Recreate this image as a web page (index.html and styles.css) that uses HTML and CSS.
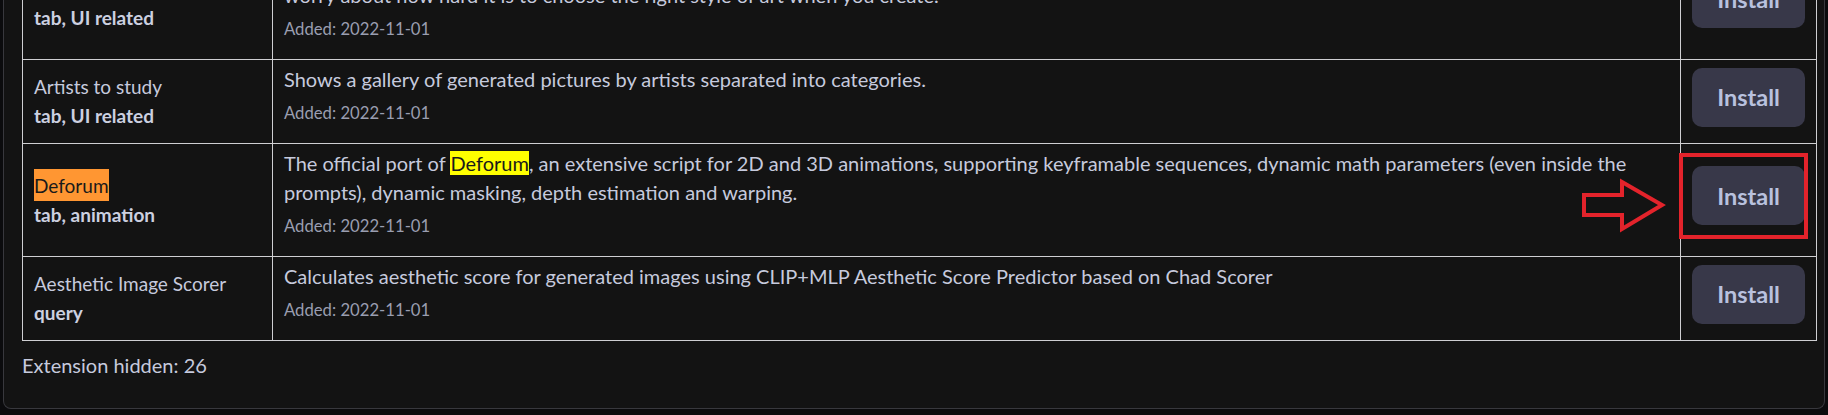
FILE: index.html
```html
<!DOCTYPE html>
<html lang="en">
<head>
    <meta charset="UTF-8">
    <meta name="viewport" content="width=device-width, initial-scale=1.0">
    <title>Extensions - Available</title>
    <link rel="stylesheet" href="styles.css">
</head>
<body>
    <div class="panel">
        <table class="ext-table">
            <colgroup>
                <col class="col-name">
                <col>
                <col class="col-action">
            </colgroup>
            <tr>
                <td class="name-cell">
                    <a class="ext-name">Inspiration</a><br>
                    <span class="ext-tags">tab, UI related</span>
                </td>
                <td class="desc-cell">
                    Randomly display the pictures of the artist's or artistic genres typical style, more pictures of this artist or genre is displayed after selecting. So you don't have to worry about how hard it is to choose the right style of art when you create.
                    <p class="date-added">Added: 2022-11-01</p>
                </td>
                <td class="action-cell"><button class="install-btn">Install</button></td>
            </tr>
            <tr>
                <td class="name-cell">
                    <a class="ext-name">Artists to study</a><br>
                    <span class="ext-tags">tab, UI related</span>
                </td>
                <td class="desc-cell">
                    Shows a gallery of generated pictures by artists separated into categories.
                    <p class="date-added">Added: 2022-11-01</p>
                </td>
                <td class="action-cell"><button class="install-btn">Install</button></td>
            </tr>
            <tr>
                <td class="name-cell">
                    <a class="ext-name"><mark class="hit-active">Deforum</mark></a><br>
                    <span class="ext-tags">tab, animation</span>
                </td>
                <td class="desc-cell">
                    The official port of <mark class="hit">Deforum</mark>, an extensive script for 2D and 3D animations, supporting keyframable sequences, dynamic math parameters (even inside the prompts), dynamic masking, depth estimation and warping.
                    <p class="date-added">Added: 2022-11-01</p>
                </td>
                <td class="action-cell"><button class="install-btn">Install</button></td>
            </tr>
            <tr>
                <td class="name-cell">
                    <a class="ext-name">Aesthetic Image Scorer</a><br>
                    <span class="ext-tags">query</span>
                </td>
                <td class="desc-cell">
                    Calculates aesthetic score for generated images using CLIP+MLP Aesthetic Score Predictor based on Chad Scorer
                    <p class="date-added">Added: 2022-11-01</p>
                </td>
                <td class="action-cell"><button class="install-btn">Install</button></td>
            </tr>
        </table>
        <p class="hidden-count">Extension hidden: 26</p>
    </div>

    <!-- annotation drawn over the screenshot -->
    <div class="callout-box"></div>
    <svg class="callout-arrow" width="92" height="60" viewBox="0 0 92 60">
        <polygon points="6,19 44,19 44,6 84,29 44,53 44,39 6,39" fill="none" stroke="#e3232b" stroke-width="4"/>
    </svg>
</body>
</html>
```

FILE: styles.css
```css
body {
    margin: 0;
    height: 415px;
    overflow: hidden;
    position: relative;
    background-color: #0b0b0d;
    color: #c6cadd;
    font-family: Lato, "Noto Sans", sans-serif;
    font-size: 20px;
    line-height: 29px;
}
.panel {
    margin: -54px 3px 0 3px;
    padding: 0 7px 28px 18px;
    background-color: #131313;
    border: 1px solid #38383d;
    border-top: none;
    border-radius: 0 0 8px 8px;
}
.ext-table {
    width: 100%;
    border-collapse: collapse;
    table-layout: fixed;
}
.col-name {
    width: 250px;
}
.col-action {
    width: 136px;
}
.ext-table td {
    border: 1px solid #cfcfd2;
    padding: 5px 11px 6px 11px;
}
.name-cell {
    vertical-align: middle;
    font-size: 19px;
}
.ext-name {
    color: #c6cadd;
}
.ext-tags {
    font-weight: 700;
    color: #ccd0e0;
}
.desc-cell {
    vertical-align: top;
}
.date-added {
    margin: 7px 0 12px 0;
    font-size: 16.7px;
    line-height: 24px;
    color: #9a9eb0;
}
.action-cell {
    vertical-align: middle;
    text-align: center;
}
.install-btn {
    width: 113px;
    height: 59px;
    margin-bottom: 8px;
    border: none;
    border-radius: 10px;
    background-color: #383849;
    color: #b9c1de;
    font-family: Lato, sans-serif;
    font-size: 23.5px;
    font-weight: 700;
    cursor: pointer;
}
mark {
    color: #1a1a1a;
}
.hit {
    background-color: #ffff00;
}
.hit-active {
    background-color: #ff9632;
    padding: 5px 0 4px 0;
}
.hidden-count {
    margin: 10px 0 0 0;
}
.callout-box {
    position: absolute;
    left: 1679px;
    top: 153px;
    width: 121px;
    height: 78px;
    border: 4px solid #e3232b;
}
.callout-arrow {
    position: absolute;
    left: 1578px;
    top: 176px;
}
```
